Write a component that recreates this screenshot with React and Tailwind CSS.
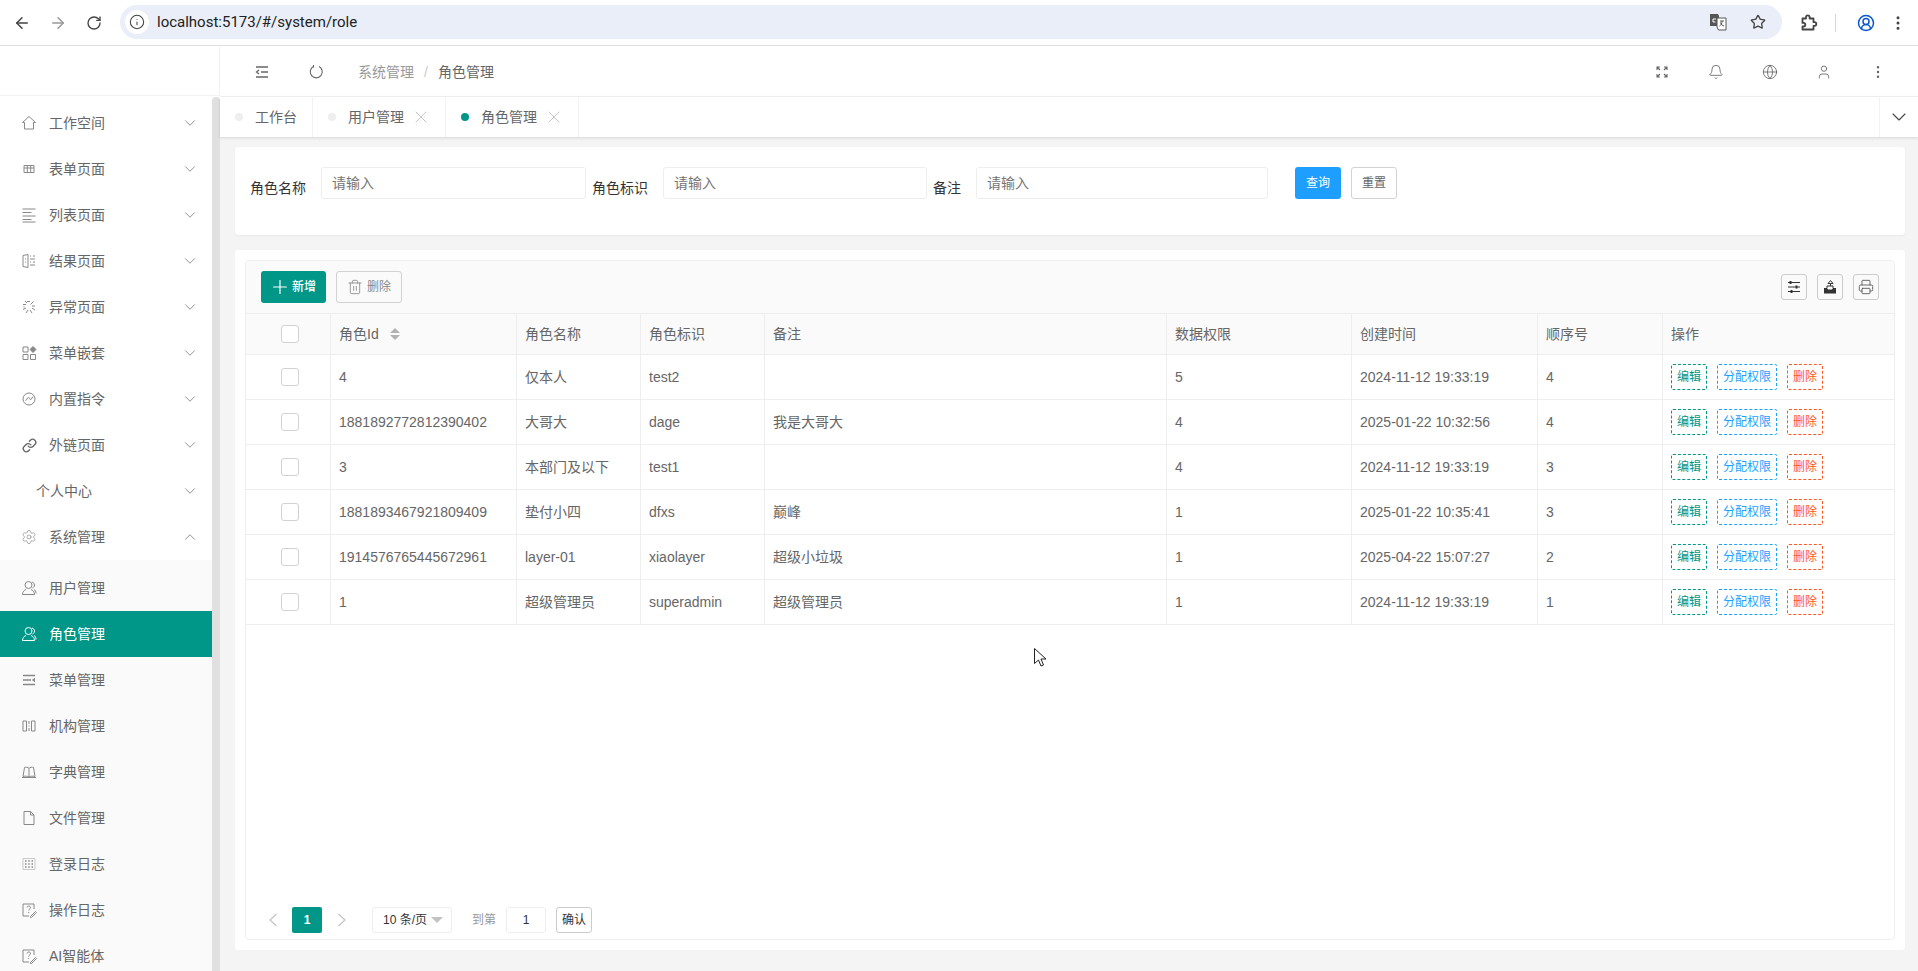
import React from 'react';
import {
  ArrowLeft, ArrowRight, RotateCw, Info, Star, CircleUserRound, EllipsisVertical,
  ChevronDown, ChevronUp, Bell, Globe, User, X, Plus, Trash2, Printer,
  Settings, Link,
} from 'lucide-react';

const Ico = ({ children, className = 'w-4 h-4' }) => (
  <svg viewBox="0 0 16 16" fill="none" stroke="currentColor" strokeWidth="1" className={className}>{children}</svg>
);

const HomeIcon = () => <Ico><path d="M8 1.500L1.500 7.500h2V14h9V7.500h2z" /></Ico>;
const FormIcon = () => <Ico><path d="M3 4.500h10v7H3zM3 7h10M6.300 4.500v7M9.700 4.500v7" /></Ico>;
const ListIcon = () => <Ico><path d="M1.500 2h13M1.500 5.500h9M1.500 9h13M1.500 12.500h9M1.500 15h13" /></Ico>;
const ResultIcon = () => <Ico><path d="M2 2.500l5-1v13l-5-1zM9 3h1M12 3h2M9 6h5M9 9h1M12 9h2M9 12h5M4 6h1M4 9h1" /></Ico>;
const ErrorIcon = () => <Ico><path d="M4 2l2 2M2 5.500h3M12.500 2.500l-3 3M14 7h-3M2 10.500l3-1.500M5 14l2-3M9 11l2 3M11 9l3 2M6 2.500h3M2.500 8h1" /></Ico>;
const NestIcon = () => (
  <Ico>
    <path d="M2 2h5v5H2zM2 9.500h5v5H2zM9.500 9.500h5v5h-5z" />
    <path d="M12 1.500l3 3-3 3-3-3z" fill="currentColor" />
  </Ico>
);
const CommandIcon = () => <Ico><circle cx="8" cy="8" r="6" /><path d="M4.500 9.500c1.500 0 1.500-3 3-3s1 2.500 2.500 2l2-3" /></Ico>;
const PersonIcon = () => (
  <Ico>
    <circle cx="7.500" cy="5" r="3.500" />
    <path d="M1.500 14.500c0-3 2-4.500 3.500-5M10 9.500c1.500.5 3.500 2 3.500 5h-12M11 2c1.500.5 2.500 1.500 2.500 3s-1 2.500-2 3M13 9.500c1.200.6 2 2 2 4" />
  </Ico>
);
const MenuMgrIcon = () => <Ico><path d="M2 3.500h12M2 8h8M2 12.500h12" strokeWidth="1.300" /><path d="M13.500 6.500l-2 1.500 2 1.500z" fill="currentColor" /></Ico>;
const OrgIcon = () => <Ico><path d="M2 3h3.500v10H2zM10.500 3H14v10h-3.500zM8 3v3M8 7.500v1M8 10v3" /></Ico>;
const BookIcon = () => (
  <Ico>
    <path d="M8 4.500C7 3 5 3 3.500 3.500L2 12.500c2-.5 4.500-.5 6 .5 1.500-1 4-1 6-.5l-1.500-9C11 3 9 3 8 4.500zM8 4.500V13M1 13.500h14" />
  </Ico>
);
const FileIcon = () => <Ico><path d="M3 1.500h6.500L13 5v9.500H3zM9.500 1.500V5H13" /></Ico>;
const LogIcon = () => (
  <Ico>
    <path d="M2 2.500h12v11H2z" stroke="#c9c9c9" />
    <path d="M4 5h1.500M7.200 5h1.500M10.500 5H12M4 8h1.500M7.200 8h1.500M10.500 8H12M4 11h1.500M7.200 11h1.500M10.500 11H12" strokeWidth="1.500" />
  </Ico>
);
const NoteIcon = () => (
  <Ico>
    <path d="M13 7V2H2v12h6" />
    <path d="M6 5.500c0-2 3.500-2 3.500 0 0 1.500-1.800 1.500-1.800 3M7.700 10v1M9.500 14.500l5-5 1 1-5 5H9.500z" />
  </Ico>
);

const topMenus = [
  { name: '工作空间', icon: <HomeIcon /> },
  { name: '表单页面', icon: <FormIcon /> },
  { name: '列表页面', icon: <ListIcon /> },
  { name: '结果页面', icon: <ResultIcon /> },
  { name: '异常页面', icon: <ErrorIcon /> },
  { name: '菜单嵌套', icon: <NestIcon /> },
  { name: '内置指令', icon: <CommandIcon /> },
  { name: '外链页面', icon: <Link className="w-[15px] h-[15px] text-[#666]" strokeWidth={2.2} /> },
  { name: '个人中心', icon: null },
  { name: '系统管理', icon: <Settings className="w-4 h-4" strokeWidth={1} />, open: true },
];

const subMenus = [
  { name: '用户管理', icon: <PersonIcon /> },
  { name: '角色管理', icon: <PersonIcon />, active: true },
  { name: '菜单管理', icon: <MenuMgrIcon /> },
  { name: '机构管理', icon: <OrgIcon /> },
  { name: '字典管理', icon: <BookIcon /> },
  { name: '文件管理', icon: <FileIcon /> },
  { name: '登录日志', icon: <LogIcon /> },
  { name: '操作日志', icon: <NoteIcon /> },
  { name: 'AI智能体', icon: <NoteIcon /> },
];

const roles = [
  { id: '4', name: '仅本人', key: 'test2', remark: '', scope: '5', time: '2024-11-12 19:33:19', sort: '4' },
  { id: '1881892772812390402', name: '大哥大', key: 'dage', remark: '我是大哥大', scope: '4', time: '2025-01-22 10:32:56', sort: '4' },
  { id: '3', name: '本部门及以下', key: 'test1', remark: '', scope: '4', time: '2024-11-12 19:33:19', sort: '3' },
  { id: '1881893467921809409', name: '垫付小四', key: 'dfxs', remark: '巅峰', scope: '1', time: '2025-01-22 10:35:41', sort: '3' },
  { id: '1914576765445672961', name: 'layer-01', key: 'xiaolayer', remark: '超级小垃圾', scope: '1', time: '2025-04-22 15:07:27', sort: '2' },
  { id: '1', name: '超级管理员', key: 'superadmin', remark: '超级管理员', scope: '1', time: '2024-11-12 19:33:19', sort: '1' },
];

const MenuRow = ({ item }) => (
  <div className="flex items-center h-[46px] text-[#666] text-sm">
    <span className="w-[49px] flex justify-center pl-[9px] shrink-0 text-[#888]">{item.icon}</span>
    <span className={item.icon ? '' : '-ml-[13px]'}>{item.name}</span>
    <span className="ml-auto mr-[13px] text-[#888]">
      {item.open ? <ChevronUp className="w-[18px] h-[18px]" strokeWidth={1.2} /> : <ChevronDown className="w-[18px] h-[18px]" strokeWidth={1.2} />}
    </span>
  </div>
);

const Sidebar = () => (
  <aside className="w-[220px] shrink-0 flex flex-col bg-white">
    <div className="h-[50px] shrink-0 border-b border-[#f2f2f2] border-r" />
    <div className="flex flex-1 min-h-0">
      <nav className="w-[212px] pt-1 overflow-hidden">
        {topMenus.map((item) => <MenuRow key={item.name} item={item} />)}
        <div className="bg-[#fafafa] pt-[5px]">
          {subMenus.map((item) => (
            <div
              key={item.name}
              className={`flex items-center h-[46px] text-sm ${item.active ? 'bg-[#009688] text-white' : 'text-[#666]'}`}
            >
              <span className={`w-[49px] flex justify-center pl-[9px] shrink-0 ${item.active ? 'text-white' : 'text-[#888]'}`}>{item.icon}</span>
              <span>{item.name}</span>
            </div>
          ))}
        </div>
      </nav>
      <div className="w-2 mt-px rounded-t bg-[#e0e0e0]" />
    </div>
  </aside>
);

const BrowserBar = () => (
  <div className="h-[46px] shrink-0 flex items-center border-b border-[#dedede] bg-white text-[#444]">
    <ArrowLeft className="w-[18px] h-[18px] ml-[13px]" strokeWidth={2} />
    <ArrowRight className="w-[18px] h-[18px] ml-[18px] text-[#999]" strokeWidth={2} />
    <RotateCw className="w-4 h-4 ml-[19px]" strokeWidth={2} />
    <div className="ml-[18px] w-[1662px] h-[34px] -mt-px rounded-full bg-[#e9eef8] flex items-center pl-[5px]">
      <span className="w-6 h-6 rounded-full bg-white flex items-center justify-center">
        <Info className="w-4 h-4" strokeWidth={1.6} />
      </span>
      <span className="ml-[8px] text-[15px] text-[#222] font-['Roboto',sans-serif]">localhost:5173/#/system/role</span>
      <svg viewBox="0 0 18 18" className="w-[18px] h-[18px] ml-auto mr-[23px]">
        <path d="M1 1h8l1 2v10H1z" fill="#555" />
        <path d="M8 5h9v12H9.500L8 14z" fill="#fff" stroke="#555" />
        <path d="M11 8h4M13 8c0 3-1 4-2.500 5M11.500 9.500c.5 2 2 3 3.500 3.500" stroke="#555" fill="none" />
        <path d="M7 6H4v3h2.500" stroke="#fff" fill="none" />
      </svg>
      <Star className="w-4 h-4 mr-[16px]" strokeWidth={2} />
    </div>
    <svg viewBox="0 0 18 18" fill="none" stroke="currentColor" strokeWidth="1.800" strokeLinejoin="round" className="w-[18px] h-[18px] ml-[18px]">
      <path d="M2.500 4.500H6V3.200a1.800 1.800 0 0 1 3.600 0v1.300h3.900v3.700h1a1.800 1.800 0 0 1 0 3.600h-1v3.700h-11v-3h1a1.800 1.800 0 0 0 0-3.600h-1z" />
    </svg>
    <span className="w-px h-[18px] ml-[17px] bg-[#c7d8f0]" />
    <CircleUserRound className="w-[18px] h-[18px] ml-[21px] text-[#0b57d0]" strokeWidth={2} />
    <EllipsisVertical className="w-[18px] h-[18px] ml-[14px]" strokeWidth={2} />
  </div>
);

const TopBar = () => (
  <div className="h-[51px] shrink-0 flex items-center border-b border-[#f2f2f2] text-[#666] bg-white pt-px">
    <svg viewBox="0 0 16 16" fill="none" stroke="currentColor" strokeWidth="1.300" className="w-4 h-4 ml-[34px]">
      <path d="M2 3h12M7 8h7M2 13h12" />
      <path d="M5 6L2.500 8 5 10" />
    </svg>
    <svg viewBox="0 0 16 16" fill="none" stroke="#666" strokeWidth="1.100" className="w-4 h-4 ml-[38px]">
      <path d="M11 2.500A6 6 0 1 1 5.500 2.500" />
      <path d="M5.500 1v2.500" />
    </svg>
    <span className="ml-[34px] text-sm text-[#999]">系统管理</span>
    <span className="mx-[10px] text-sm text-[#ccc]">/</span>
    <span className="text-sm text-[#666]">角色管理</span>
    <div className="ml-auto flex items-center gap-[38px] mr-[32px]">
      <svg viewBox="0 0 16 16" fill="none" stroke="currentColor" strokeWidth="1.100" className="w-4 h-4">
        <path d="M3 6V3h3M3 3l3 3M13 6V3h-3M13 3l-3 3M3 10v3h3M3 13l3-3M13 10v3h-3M13 13l-3-3" />
      </svg>
      <Bell className="w-4 h-4" strokeWidth={1.3} />
      <Globe className="w-4 h-4" strokeWidth={1.3} />
      <User className="w-4 h-4" strokeWidth={1.3} />
      <EllipsisVertical className="w-4 h-4" strokeWidth={1.8} />
    </div>
  </div>
);

const Tab = ({ label, active, closable, className }) => (
  <div className={`h-full flex items-center border-r border-[#f2f2f2] text-sm text-[#666] ${className}`}>
    <span className={`w-2 h-2 rounded-full ml-[15px] mr-[12px] shrink-0 ${active ? 'bg-[#009688]' : 'bg-[#eee]'}`} />
    <span>{label}</span>
    {closable && <X className="w-5 h-5 ml-[7px] text-[#bbb]" strokeWidth={1} />}
  </div>
);

const Tabs = () => (
  <div className="h-10 shrink-0 flex items-center bg-white shadow-[0_1px_3px_rgba(0,0,0,0.12)] z-10">
    <Tab label="工作台" className="w-[93px]" />
    <Tab label="用户管理" closable className="w-[133px]" />
    <Tab label="角色管理" active closable className="w-[133px]" />
    <div className="ml-auto w-[39px] h-full border-l border-[#f2f2f2] flex items-center justify-center">
      <ChevronDown className="w-6 h-6 text-[#444]" strokeWidth={1.1} />
    </div>
  </div>
);

const Field = ({ label, width }) => (
  <>
    <label className="shrink-0 mt-[11px] text-sm leading-5 text-[#333]">{label}</label>
    <input
      placeholder="请输入"
      className={`ml-[15px] mr-[6px] h-8 px-[10px] text-sm rounded-[3px] border border-[#eee] outline-none placeholder:text-[#757575] ${width}`}
    />
  </>
);

const FilterCard = () => (
  <div className="h-[88px] flex items-start pt-5 pl-[15px] bg-white rounded shadow-[0_1px_2px_rgba(0,0,0,0.05)]">
    <Field label="角色名称" width="w-[265px]" />
    <Field label="角色标识" width="w-[264px]" />
    <Field label="备注" width="w-[292px]" />
    <button className="ml-[21px] w-[46px] h-8 rounded-[3px] bg-[#1e9fff] text-white text-xs">查询</button>
    <button className="ml-[10px] w-[46px] h-8 rounded-[3px] border border-[#d2d2d2] bg-white text-[#666] text-xs">重置</button>
  </div>
);

const OutlineBtn = ({ children, className }) => (
  <button className={`h-[26px] rounded-[2px] border border-dashed text-xs ${className}`}>{children}</button>
);

const ToolIcon = ({ children }) => (
  <button className="w-[26px] h-[26px] flex items-center justify-center rounded-[3px] border border-[#ccc] text-[#333]">{children}</button>
);

const Check = () => (
  <div className="flex justify-center pl-1">
    <span className="w-[18px] h-[18px] rounded-[3px] border border-[#d2d2d2] bg-white" />
  </div>
);

const Toolbar = () => (
  <div className="h-[53px] shrink-0 flex items-center px-[15px] bg-[#fafafa] border-b border-[#eee] rounded-t">
    <button className="w-[65px] h-8 flex items-center pl-2 gap-px rounded-[3px] bg-[#009688] text-white text-xs font-medium">
      <Plus className="w-[22px] h-[22px]" strokeWidth={1.3} />
      新增
    </button>
    <button className="ml-[10px] w-[66px] h-8 flex items-center justify-center gap-[4px] rounded-[3px] border border-[#d2d2d2] text-[#888] text-xs">
      <Trash2 className="w-4 h-4 text-[#777]" strokeWidth={1.1} />
      删除
    </button>
    <div className="ml-auto flex gap-[10px]">
      <ToolIcon>
        <svg viewBox="0 0 16 16" className="w-4 h-4" fill="none" stroke="currentColor">
          <path d="M2 3.500h12M2 8h12M2 12.500h12" strokeWidth="1" />
          <path d="M4.500 2v3M10.500 6.500v3M5.500 11v3" strokeWidth="2" />
        </svg>
      </ToolIcon>
      <ToolIcon>
        <svg viewBox="0 0 16 16" className="w-4 h-4" fill="currentColor">
          <path d="M2 9h3l1 1.500h4L11 9h3v5.500H2z" />
          <path d="M5 9V7h6v2" fill="none" stroke="currentColor" />
          <path d="M8.500 7V4.500L6 4.500 8.500 1.500 11 4.500H8.500" fill="none" stroke="currentColor" />
        </svg>
      </ToolIcon>
      <ToolIcon><Printer className="w-4 h-4 text-[#555]" strokeWidth={1.3} /></ToolIcon>
    </div>
  </div>
);

const RoleTable = () => {
  const th = 'h-[41px] px-2 text-left font-normal border-r border-b border-[#eee] bg-[#fafafa]';
  const td = 'h-[45px] px-2 border-r border-b border-[#eee]';
  return (
    <table className="w-full table-fixed border-separate border-spacing-0 text-sm text-[#666]">
      <colgroup>
        <col className="w-[85px]" />
        <col className="w-[186px]" />
        <col className="w-[124px]" />
        <col className="w-[124px]" />
        <col className="w-[402px]" />
        <col className="w-[185px]" />
        <col className="w-[186px]" />
        <col className="w-[125px]" />
        <col />
      </colgroup>
      <thead>
        <tr>
          <th className={th}><Check /></th>
          <th className={th}>
            <span className="flex items-center">
              角色Id
              <span className="ml-[11px] flex flex-col gap-[2px]">
                <span className="w-0 h-0 border-x-[5px] border-x-transparent border-b-[5px] border-b-[#b2b2b2]" />
                <span className="w-0 h-0 border-x-[5px] border-x-transparent border-t-[5px] border-t-[#b2b2b2]" />
              </span>
            </span>
          </th>
          <th className={th}>角色名称</th>
          <th className={th}>角色标识</th>
          <th className={th}>备注</th>
          <th className={th}>数据权限</th>
          <th className={th}>创建时间</th>
          <th className={th}>顺序号</th>
          <th className={`${th} border-r-0`}>操作</th>
        </tr>
      </thead>
      <tbody>
        {roles.map((r) => (
          <tr key={r.id}>
            <td className={td}><Check /></td>
            <td className={td}>{r.id}</td>
            <td className={td}>{r.name}</td>
            <td className={td}>{r.key}</td>
            <td className={td}>{r.remark}</td>
            <td className={td}>{r.scope}</td>
            <td className={td}>{r.time}</td>
            <td className={td}>{r.sort}</td>
            <td className={`${td} border-r-0`}>
              <div className="flex gap-[10px]">
                <OutlineBtn className="w-9 border-[#009688] text-[#009688]">编辑</OutlineBtn>
                <OutlineBtn className="w-[60px] border-[#1e9fff] text-[#1e9fff]">分配权限</OutlineBtn>
                <OutlineBtn className="w-9 border-[#ff5722] text-[#ff5722]">删除</OutlineBtn>
              </div>
            </td>
          </tr>
        ))}
      </tbody>
    </table>
  );
};

const PageArrow = ({ d, className }) => (
  <svg viewBox="0 0 10 14" fill="none" stroke="#c2c2c2" strokeWidth="1.200" className={`w-[10px] h-[14px] ${className}`}>
    <path d={d} />
  </svg>
);

const Pagination = () => (
  <div className="mt-auto mb-[6px] h-[26px] flex items-center pl-[22px] text-xs">
    <PageArrow d="M8.500 1L2 7l6.500 6" />
    <span className="ml-[14px] w-[30px] h-[26px] flex items-center justify-center rounded-[2px] bg-[#009688] text-white font-bold">1</span>
    <PageArrow d="M1.500 1L8 7l-6.500 6" className="ml-[15px]" />
    <div className="ml-[25px] w-20 h-[26px] flex items-center pl-[10px] rounded-[3px] border border-[#eee] text-[#333]">
      10 条/页
      <span className="ml-[4px] w-0 h-0 border-x-[6px] border-x-transparent border-t-[6px] border-t-[#c2c2c2]" />
    </div>
    <span className="ml-5 text-[#999]">到第</span>
    <span className="ml-[10px] w-10 h-[26px] flex items-center justify-center rounded-[3px] border border-[#eee] text-[#333]">1</span>
    <button className="ml-[10px] w-9 h-[26px] rounded-[3px] border border-[#ccc] text-[#333]">确认</button>
  </div>
);

export default function App() {
  return (
    <div className="relative h-screen overflow-hidden flex flex-col bg-white font-['Liberation_Sans','Noto_Sans_CJK_SC',sans-serif]">
      <BrowserBar />
      <div className="flex flex-1 min-h-0">
        <Sidebar />
        <main className="flex-1 min-w-0 flex flex-col">
          <TopBar />
          <Tabs />
          <div className="flex-1 min-h-0 bg-[#f4f4f4] pt-[10px] pl-[15px] pr-[13px] pb-[21px] flex flex-col gap-[15px]">
            <FilterCard />
            <div className="flex-1 min-h-0 bg-white rounded p-[10px]">
              <div className="h-full flex flex-col border border-[#eee] rounded">
                <Toolbar />
                <RoleTable />
                <Pagination />
              </div>
            </div>
          </div>
        </main>
      </div>
      {/* mouse pointer left in the screenshot */}
      <svg viewBox="0 0 12 19" className="absolute left-[1034px] top-[648px] w-3 h-[19px]">
        <path d="M.5.500v15l4-3.500 2.500 6 2.500-1-2.500-6h5z" fill="#fff" stroke="#222" />
      </svg>
    </div>
  );
}
